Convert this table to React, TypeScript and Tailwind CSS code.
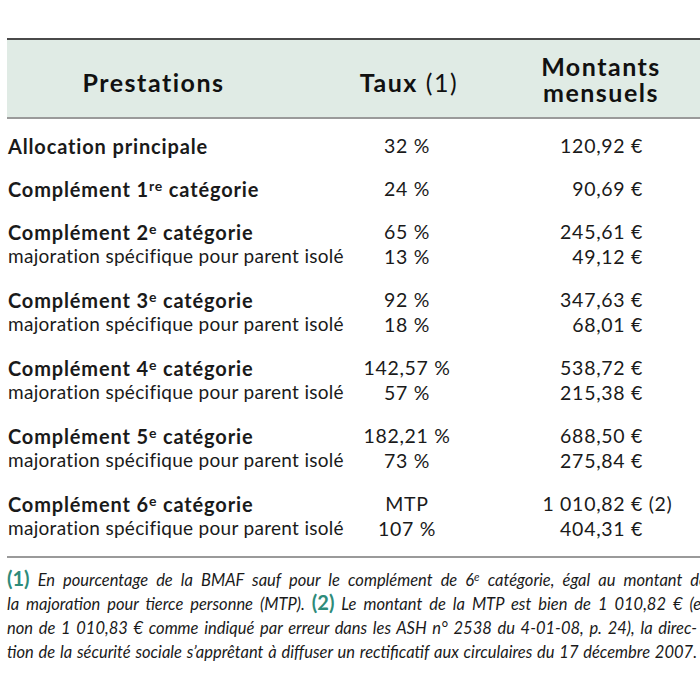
const font = "font-['Lato',_'Open_Sans',_sans-serif]"

type Row = { label: React.ReactNode; taux: string; montant: React.ReactNode; bold?: boolean }

const Sup = ({ t }: { t: string }) => <span className="relative -top-[0.42em] text-[0.7em] leading-none">{t}</span>

const groups: Row[][] = [
  [{ label: "Allocation principale", taux: "32 %", montant: "120,92 €", bold: true }],
  [{ label: <>Complément 1<Sup t="re" /> catégorie</>, taux: "24 %", montant: "90,69 €", bold: true }],
  [
    { label: <>Complément 2<Sup t="e" /> catégorie</>, taux: "65 %", montant: "245,61 €", bold: true },
    { label: "majoration spécifique pour parent isolé", taux: "13 %", montant: "49,12 €" },
  ],
  [
    { label: <>Complément 3<Sup t="e" /> catégorie</>, taux: "92 %", montant: "347,63 €", bold: true },
    { label: "majoration spécifique pour parent isolé", taux: "18 %", montant: "68,01 €" },
  ],
  [
    { label: <>Complément 4<Sup t="e" /> catégorie</>, taux: "142,57 %", montant: "538,72 €", bold: true },
    { label: "majoration spécifique pour parent isolé", taux: "57 %", montant: "215,38 €" },
  ],
  [
    { label: <>Complément 5<Sup t="e" /> catégorie</>, taux: "182,21 %", montant: "688,50 €", bold: true },
    { label: "majoration spécifique pour parent isolé", taux: "73 %", montant: "275,84 €" },
  ],
  [
    {
      label: <>Complément 6<Sup t="e" /> catégorie</>,
      taux: "MTP",
      montant: (
        <span className="relative">
          1 010,82 €<span className="absolute left-full whitespace-nowrap">&nbsp;(2)</span>
        </span>
      ),
      bold: true,
    },
    { label: "majoration spécifique pour parent isolé", taux: "107 %", montant: "404,31 €" },
  ],
]

function TableRow({ row }: { row: Row }) {
  return (
    <div className="flex h-[25px] items-center text-[#1a1a1a]">
      <div
        className={`w-[343px] whitespace-nowrap ${
          row.bold ? "text-[20px] font-bold tracking-[0.85px]" : "text-[19px] tracking-[0.3px]"
        }`}
      >
        {row.label}
      </div>
      <div className="w-[112px] text-center text-[19.5px] tracking-[0.7px] whitespace-nowrap">{row.taux}</div>
      <div className="w-[180px] text-right text-[19.5px] tracking-[0.7px] whitespace-nowrap">{row.montant}</div>
    </div>
  )
}

const Num = ({ n }: { n: string }) => (
  <span className="not-italic font-bold text-[20px] leading-none text-[#2e8b7a]">{n}</span>
)

const noteLine = "h-[24px] whitespace-nowrap text-justify [text-align-last:justify]"

export default function App() {
  return (
    <div className={`w-[700px] h-[677px] overflow-hidden bg-white ${font}`}>
      <div className="pt-[38px] pl-[7px] w-[720px]">
        {/* header */}
        <div className="flex h-[81px] items-center border-t-2 border-b-2 border-t-[#4a4a4a] border-b-[#9a9a9a] bg-[#e0ebe5] text-[#111] text-[25px] tracking-[1.5px]">
          <div className="w-[293px] pt-[8px] text-center font-bold">Prestations</div>
          <div className="w-[218px] pt-[8px] text-center">
            <span className="font-bold">Taux</span> (1)
          </div>
          <div className="flex w-[166px] flex-col text-center font-bold">
            <div className="h-[26px] leading-[26px]">Montants</div>
            <div className="h-[26px] leading-[26px]">mensuels</div>
          </div>
        </div>

        {/* body */}
        <div className="flex flex-col gap-[18px] pt-[14px] pb-[15px] pl-[1px] border-b-2 border-b-[#9a9a9a]">
          {groups.map((g, i) => (
            <div key={i}>
              {g.map((r, j) => (
                <TableRow key={j} row={r} />
              ))}
            </div>
          ))}
        </div>

        {/* notes */}
        <div className="pt-[10px] w-[700px] text-[16.5px] italic leading-[24px] text-[#1a1a1a]">
          <div className={noteLine}>
            <Num n="(1)" /> En pourcentage de la BMAF sauf pour le complément de 6<Sup t="e" /> catégorie, égal au montant de
          </div>
          <div className={noteLine}>
            la majoration pour tierce personne (MTP). <Num n="(2)" /> Le montant de la MTP est bien de 1 010,82 € (et
          </div>
          <div className={`${noteLine} w-[690px]`}>
            non de 1 010,83 € comme indiqué par erreur dans les ASH n° 2538 du 4-01-08, p. 24), la direc-
          </div>
          <div className={`${noteLine} w-[690px]`}>
            tion de la sécurité sociale s’apprêtant à diffuser un rectificatif aux circulaires du 17 décembre 2007.
          </div>
        </div>
      </div>
    </div>
  )
}
